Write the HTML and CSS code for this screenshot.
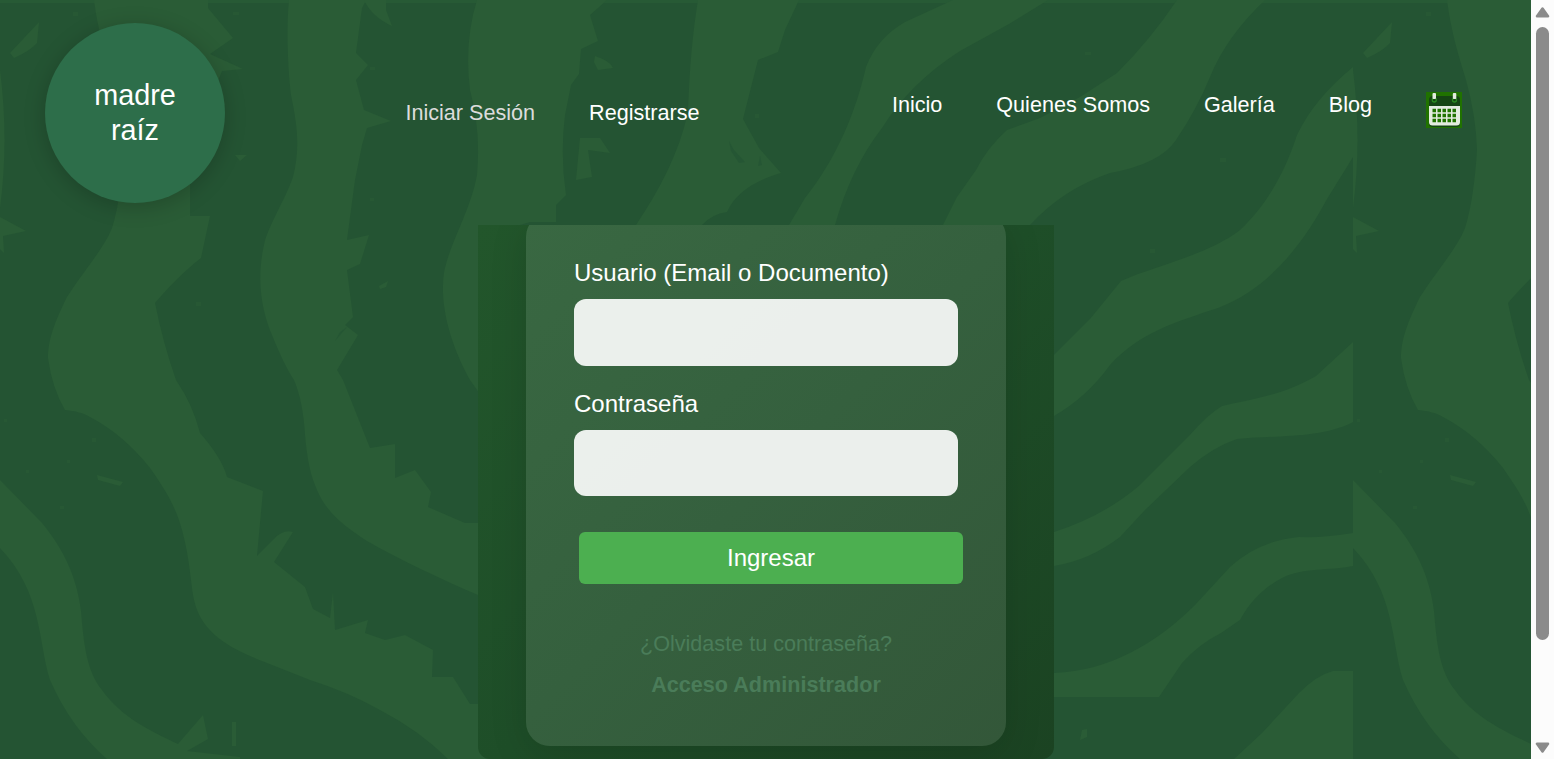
FILE: index.html
```
<!DOCTYPE html>
<html lang="es">
<head>
<meta charset="utf-8">
<title>Madre Raíz - Iniciar Sesión</title>
<link rel="stylesheet" href="styles.css">
</head>
<body>
<div class="viewport">
  <div class="page">
    <svg class="backdrop" viewBox="0 0 1531 759" width="1531" height="759" aria-hidden="true">
      <defs>
        <g id="tile" fill="#2a5c36">
          <rect width="1353" height="759" fill="#245433"/>
          <path opacity=".7" d="M0 0H1353V3H0Z"/>
          <path d="M0 70Q9 140 0 208Z"/>
          <path d="M94 0C98 32 106 57 113 80Q123 116 124 150C122 182 118 209 112 228C104 248 88 265 67 297C53 325 48 342 48 358Q52 388 65 410C76 411 83 413 90 417Q124 435 150 468C166 491 175 505 182 530C190 560 190 578 194 600C202 636 235 650 262 661L310 680Q348 692 380 710Q420 731 448 759H560L478 704H470L453 677H432L433 650L405 635L385 640L365 633L368 620L335 630L333 592L330 618L313 609L305 587L274 562L293 532Q283 529 274 539L257 556L263 491L227 477Q222 458 200 433Q193 405 176 380Q163 343 155 303C168 288 184 271 201 258L210 216H190V150L222 71L243 69L210 54L233 38L208 8V0Z"/>
          <path d="M289 0C286 30 288 70 291 95C299 133 299 152 293 177C285 200 268 226 264 245C256 280 262 312 272 335Q284 365 294 380Q303 401 305 435C308 467 312 481 322 500C333 518 350 530 367 541C400 560 443 580 478 595V523H465L428 507L431 492L415 470L395 478V444L370 448L343 380L337 370L358 335L345 325L353 317L347 270L360 264L369 235L347 240L355 180L362 145L367 128L391 121L364 110L356 80L368 65L356 53L362 8L366 0Z"/>
          <path d="M477 0Q464 42 470 90Q481 130 477 175C471 210 449 244 444 273C439 307 452 348 470 380L520 450V225L530 222H556V205L566 195Q560 155 565 115L571 85L579 74L581 49L598 41L590 15L607 0Z"/>
          <path d="M698 0Q690 48 688 112C679 153 660 189 636 225H702Q712 214 727 212C735 194 753 181 781 173L759 148L743 119L758 60L778 52L785 30L799 0Z"/>
          <path d="M953 0L905 22Q877 38 866 67C856 111 837 158 805 198L789 225H835Q851 168 882 128Q910 83 960 51L1009 24L1048 0Z"/>
          <path d="M1177 0Q1151 39 1117 73L1080 97L1040 118L1007 130Q987 148 976 170L957 197L943 225H1030Q1063 189 1110 173Q1160 164 1176 140Q1197 109 1210 77Q1226 37 1265 0Z"/>
          <path d="M1353 67Q1314 99 1297 135C1282 181 1262 209 1240 230C1208 255 1154 266 1121 281L1090 319L1054 355V416Q1087 397 1110 365C1140 332 1176 322 1218 308C1272 287 1305 240 1327 199L1353 157Z"/>
          <path d="M1353 342L1316 376C1282 396 1251 399 1222 406Q1207 415 1190 435L1140 485Q1104 516 1054 532V566Q1090 560 1120 537L1145 510L1190 467Q1213 447 1237 439C1276 435 1321 439 1353 422Z"/>
          <path d="M1353 533Q1324 538 1299 537Q1258 541 1230 567L1195 605C1157 643 1109 671 1054 673V697H1159L1182 663Q1199 644 1221 633L1240 620C1251 600 1265 587 1282 578C1304 567 1329 571 1353 566Z"/>
          <path d="M1353 671H1333Q1317 675 1299 693L1262 733L1234 759H1353Z"/>
          <path d="M0 480L42 523C63 549 76 574 81 611C84 647 87 671 102 690C121 717 149 730 178 744L203 715L208 739L187 751L240 757V759H107Q71 728 50 680C38 643 43 593 0 548Z"/>
          <path d="M10 53L39 22L37 43Q30 51 14 58ZM0 217L26 231L3 236L4 253L0 249ZM97 475L123 482L120 486L98 480ZM235 155L247 155L240 161ZM364 0Q372 17 392 26L386 10V0ZM595 56Q610 61 613 68L598 70L594 62ZM580 138H600L610 153L588 150L592 177L576 180ZM232 722H236V746H232ZM379 286L388 281L386 287L380 289ZM1082 730L1087 729V737L1080 740Z"/>
          <path class="flecks" d="M73 12h5v4h-5zM233 12h6v3h-6zM196 302h5v4h-5zM92 438h4v4h-4zM67 460h3v3h-3zM26 470h3v3h-3zM60 506h4v3h-4zM4 419h3v3h-3zM370 67h5v3h-5zM370 198h4v3h-4zM755 114h4v4h-4zM1085 52h6v3h-6zM1220 158h6v4h-6zM1150 249h5v4h-5z"/>
          <path fill="#245433" opacity=".7" d="M729 141L734 150L745 162L739 163L731 151ZM760 156L762 165L758 166ZM335 341L347 327L340 332Z"/>
        </g>
      </defs>
      <use href="#tile"/>
      <use href="#tile" x="1353"/>
    </svg>

    <header class="header">
      <a class="logo" href="#">madre<br>raíz</a>
      <nav class="nav nav-session">
        <a class="active" href="#">Iniciar Sesión</a>
        <a href="#">Registrarse</a>
      </nav>
      <nav class="nav nav-main">
        <a href="#">Inicio</a>
        <a href="#">Quienes Somos</a>
        <a href="#">Galería</a>
        <a href="#">Blog</a>
        <a class="calendar" href="#" aria-label="Calendario">
          <svg viewBox="0 0 36 36" width="36" height="36">
            <rect width="36" height="36" fill="#207200"/>
            <path fill="#154513" d="M3 8Q3 4 7 4H30Q34 4 34 8V32Q34 35 30 35H7Q3 35 3 32Z"/>
            <path fill="#e3ebdf" d="M3 14H34V30Q34 33.500 30.500 33.500H6.500Q3 33.500 3 30Z"/>
            <circle cx="8.300" cy="8" r="2" fill="none" stroke="#2a8b20" stroke-width="1.300"/>
            <circle cx="28.500" cy="8" r="2" fill="none" stroke="#2a8b20" stroke-width="1.300"/>
            <rect x="6.500" y="1" width="3.500" height="6" rx="1" fill="#e3ebdf"/>
            <rect x="26.800" y="1" width="3.500" height="6" rx="1" fill="#e3ebdf"/>
            <path stroke="#207200" stroke-width="3.500" stroke-dasharray="3.500 1.500" d="M6.500 18.500H30.500M6.500 23.500H30.500M6.500 28.500H30.500"/>
          </svg>
        </a>
      </nav>
    </header>

    <main class="main">
      <section class="panel">
        <form class="card">
          <label class="label" for="user">Usuario (Email o Documento)</label>
          <input class="field" id="user" type="text">
          <label class="label" for="pass">Contraseña</label>
          <input class="field" id="pass" type="password">
          <button class="submit" type="button">Ingresar</button>
          <a class="link" href="#">¿Olvidaste tu contraseña?</a>
          <a class="link strong" href="#">Acceso Administrador</a>
        </form>
      </section>
    </main>
  </div>

  <div class="scrollbar" aria-hidden="true">
    <svg width="15" height="11" viewBox="0 0 15 11"><path fill="#8b8b8b" stroke="#8b8b8b" stroke-width="2.500" stroke-linejoin="round" d="M7.500 1.500L13 9.300H2Z"/></svg>
    <div class="track"><div class="thumb"></div></div>
    <svg width="15" height="11" viewBox="0 0 15 11"><path fill="#8b8b8b" stroke="#8b8b8b" stroke-width="2.500" stroke-linejoin="round" d="M2 1.700H13L7.500 9.500Z"/></svg>
  </div>
</div>
</body>
</html>
```

FILE: styles.css
```
* { box-sizing: border-box; }
body {
  margin: 0;
  font-family: "Liberation Sans", Arial, sans-serif;
  overflow: hidden;
}
a { color: inherit; text-decoration: none; }
.viewport {
  display: grid;
  grid-template-columns: 1531px 23px;
  height: 759px;
}
.page {
  position: relative;
  display: flex;
  flex-direction: column;
  height: 759px;
  overflow: hidden;
  background: #245433;
}
.backdrop { position: absolute; inset: 0; }
.flecks { opacity: .6; }
.header {
  position: relative;
  display: flex;
  align-items: flex-start;
  height: 225px;
  padding: 23px 69px 0 45px;
  color: #fff;
}
.logo {
  display: flex;
  align-items: center;
  justify-content: center;
  width: 180px;
  height: 180px;
  border-radius: 50%;
  background: #2d6e4a;
  box-shadow: 0 4px 22px rgba(0, 0, 0, .2);
  font-size: 28.8px;
  line-height: 35px;
  text-align: center;
}
.nav {
  display: flex;
  gap: 54px;
  font-size: 21.6px;
  line-height: 26px;
  white-space: nowrap;
}
.nav-session { padding: 77px 0 0 180.4px; }
.nav-main { margin-left: auto; padding-top: 69px; }
.active { color: #dcdcdc; }
.calendar { height: 36px; }
.calendar svg { display: block; }
.main {
  position: relative;
  height: 534px;
  overflow: hidden;
}
.panel {
  width: 576px;
  height: 534px;
  margin-left: 478px;
  padding: 0 48px;
  border-radius: 0 0 12px 12px;
  overflow: hidden;
  background: linear-gradient(135deg, #22562b 0%, #1e4e28 50%, #1b4322 100%);
}
.card {
  display: flex;
  flex-direction: column;
  height: 533px;
  margin-top: -12px;
  padding: 45px 48px 0;
  border-radius: 24px;
  background: linear-gradient(135deg, #396842 0%, #35603e 50%, #335739 100%);
  box-shadow: 0 10px 38px rgba(0, 0, 0, .12);
}
.label {
  color: #fff;
  font-size: 24px;
  line-height: 30px;
}
.field {
  width: 384px;
  height: 67px;
  margin: 11px 0 23px;
  padding: 0 18px;
  border: 0;
  border-radius: 12px;
  background: rgba(255, 255, 255, .9);
  font: inherit;
}
#pass { height: 66px; margin-bottom: 36px; }
.submit {
  width: 384px;
  height: 52px;
  margin: 0 0 47px 5px;
  border: 0;
  border-radius: 6px;
  background: #4caf50;
  color: #fff;
  font: 24px "Liberation Sans", Arial, sans-serif;
}
.link {
  margin-bottom: 15px;
  color: #4a7c59;
  font-size: 21.6px;
  line-height: 26px;
  text-align: center;
}
.strong { font-weight: 700; }
.scrollbar {
  display: flex;
  flex-direction: column;
  align-items: center;
  padding: 7px 0 6px;
  background: #fcfcfc;
}
.track { flex: 1; padding-top: 9px; }
.thumb {
  width: 13px;
  height: 613px;
  border-radius: 7px;
  background: #8b8b8b;
}
```
